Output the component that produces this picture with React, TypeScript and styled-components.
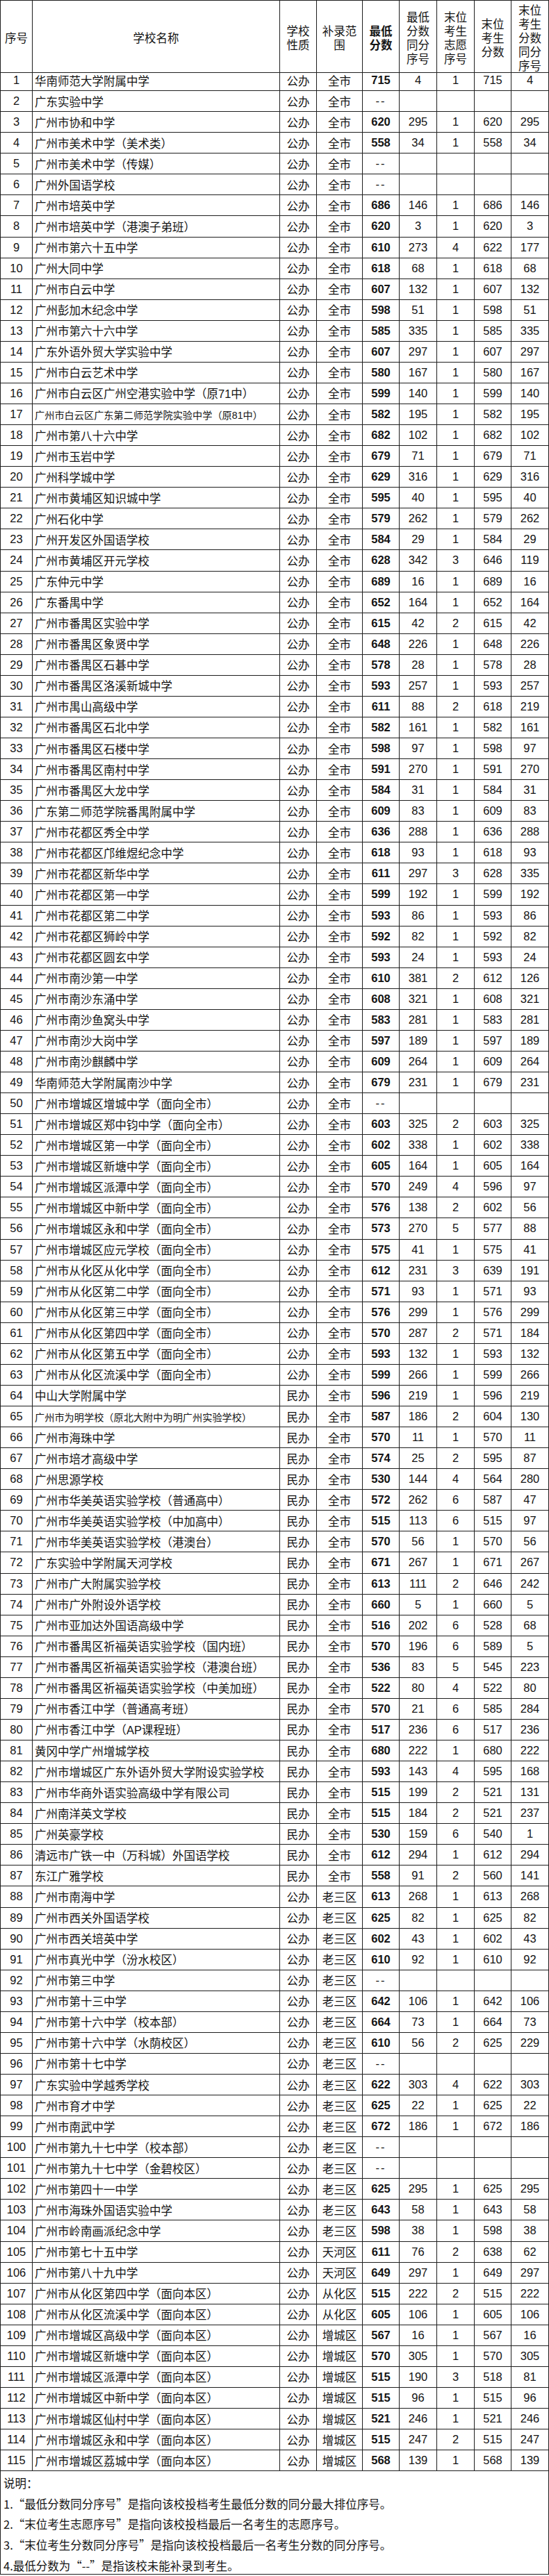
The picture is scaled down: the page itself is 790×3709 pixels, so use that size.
import React from "react";
import styled, { createGlobalStyle } from "styled-components";

const GlobalStyle = createGlobalStyle`
  html, body { margin: 0; padding: 0; background: #ffffff; }
  body {
    font-family: "Liberation Sans", "Noto Sans CJK SC", sans-serif;
    color: #141414;
  }
  * { box-sizing: border-box; }
`;

const COLS = "46px 356px 53px 66px 53px 54px 54px 53px 54px";
const LINE = "#1e1e1e";

const Sheet = styled.div`
  width: 790px;
  border-left: 1px solid ${LINE};
  border-top: 1px solid ${LINE};
  background: #fff;
`;

const HeaderRow = styled.div`
  display: grid;
  grid-template-columns: ${COLS};
  height: 100px;
`;

const HeaderCell = styled.div<{ $bold?: boolean }>`
  display: flex;
  flex-direction: column;
  align-items: center;
  justify-content: center;
  text-align: center;
  font-family: "Noto Sans CJK SC", sans-serif;
  font-size: 16.5px;
  line-height: 20px;
  font-weight: ${(p) => (p.$bold ? 700 : 400)};
  border-right: 1px solid ${LINE};
  border-bottom: 1px solid ${LINE};
  padding-top: 3px;
`;

const Row = styled.div`
  display: grid;
  grid-template-columns: ${COLS};
  height: 30.07px;
`;

const Cell = styled.div<{ $bold?: boolean }>`
  display: flex;
  align-items: center;
  justify-content: center;
  font-size: 16.5px;
  font-weight: ${(p) => (p.$bold ? 700 : 400)};
  border-right: 1px solid ${LINE};
  border-bottom: 1px solid ${LINE};
  white-space: nowrap;
  overflow: hidden;
`;

const NameCell = styled(Cell)<{ $small?: boolean }>`
  justify-content: flex-start;
  padding-left: 3px;
  font-size: ${(p) => (p.$small ? "14.2px" : "16.5px")};
`;

const Dash = styled.span`
  font-weight: 400;
  letter-spacing: 2px;
`;

const Notes = styled.div`
  height: 149px;
  border-right: 1px solid ${LINE};
  border-bottom: 1px solid ${LINE};
  padding: 3px 0 0 4px;
  font-family: "Noto Sans CJK SC", sans-serif;
  font-size: 16.5px;
  line-height: 29.6px;
`;

const NoteLine = styled.div`
  white-space: nowrap;
`;

const RAW = `华南师范大学附属中学|715|4|1|715|4
广东实验中学|--
广州市协和中学|620|295|1|620|295
广州市美术中学（美术类）|558|34|1|558|34
广州市美术中学（传媒）|--
广州外国语学校|--
广州市培英中学|686|146|1|686|146
广州市培英中学（港澳子弟班）|620|3|1|620|3
广州市第六十五中学|610|273|4|622|177
广州大同中学|618|68|1|618|68
广州市白云中学|607|132|1|607|132
广州彭加木纪念中学|598|51|1|598|51
广州市第六十六中学|585|335|1|585|335
广东外语外贸大学实验中学|607|297|1|607|297
广州市白云艺术中学|580|167|1|580|167
广州市白云区广州空港实验中学（原71中）|599|140|1|599|140
广州市白云区广东第二师范学院实验中学（原81中）|582|195|1|582|195
广州市第八十六中学|682|102|1|682|102
广州市玉岩中学|679|71|1|679|71
广州科学城中学|629|316|1|629|316
广州市黄埔区知识城中学|595|40|1|595|40
广州石化中学|579|262|1|579|262
广州开发区外国语学校|584|29|1|584|29
广州市黄埔区开元学校|628|342|3|646|119
广东仲元中学|689|16|1|689|16
广东番禺中学|652|164|1|652|164
广州市番禺区实验中学|615|42|2|615|42
广州市番禺区象贤中学|648|226|1|648|226
广州市番禺区石碁中学|578|28|1|578|28
广州市番禺区洛溪新城中学|593|257|1|593|257
广州市禺山高级中学|611|88|2|618|219
广州市番禺区石北中学|582|161|1|582|161
广州市番禺区石楼中学|598|97|1|598|97
广州市番禺区南村中学|591|270|1|591|270
广州市番禺区大龙中学|584|31|1|584|31
广东第二师范学院番禺附属中学|609|83|1|609|83
广州市花都区秀全中学|636|288|1|636|288
广州市花都区邝维煜纪念中学|618|93|1|618|93
广州市花都区新华中学|611|297|3|628|335
广州市花都区第一中学|599|192|1|599|192
广州市花都区第二中学|593|86|1|593|86
广州市花都区狮岭中学|592|82|1|592|82
广州市花都区圆玄中学|593|24|1|593|24
广州市南沙第一中学|610|381|2|612|126
广州市南沙东涌中学|608|321|1|608|321
广州市南沙鱼窝头中学|583|281|1|583|281
广州市南沙大岗中学|597|189|1|597|189
广州市南沙麒麟中学|609|264|1|609|264
华南师范大学附属南沙中学|679|231|1|679|231
广州市增城区增城中学（面向全市）|--
广州市增城区郑中钧中学（面向全市）|603|325|2|603|325
广州市增城区第一中学（面向全市）|602|338|1|602|338
广州市增城区新塘中学（面向全市）|605|164|1|605|164
广州市增城区派潭中学（面向全市）|570|249|4|596|97
广州市增城区中新中学（面向全市）|576|138|2|602|56
广州市增城区永和中学（面向全市）|573|270|5|577|88
广州市增城区应元学校（面向全市）|575|41|1|575|41
广州市从化区从化中学（面向全市）|612|231|3|639|191
广州市从化区第二中学（面向全市）|571|93|1|571|93
广州市从化区第三中学（面向全市）|576|299|1|576|299
广州市从化区第四中学（面向全市）|570|287|2|571|184
广州市从化区第五中学（面向全市）|593|132|1|593|132
广州市从化区流溪中学（面向全市）|599|266|1|599|266
中山大学附属中学|596|219|1|596|219
广州市为明学校（原北大附中为明广州实验学校）|587|186|2|604|130
广州市海珠中学|570|11|1|570|11
广州市培才高级中学|574|25|2|595|87
广州思源学校|530|144|4|564|280
广州市华美英语实验学校（普通高中）|572|262|6|587|47
广州市华美英语实验学校（中加高中）|515|113|6|515|97
广州市华美英语实验学校（港澳台）|570|56|1|570|56
广东实验中学附属天河学校|671|267|1|671|267
广州市广大附属实验学校|613|111|2|646|242
广州市广外附设外语学校|660|5|1|660|5
广州市亚加达外国语高级中学|516|202|6|528|68
广州市番禺区祈福英语实验学校（国内班）|570|196|6|589|5
广州市番禺区祈福英语实验学校（港澳台班）|536|83|5|545|223
广州市番禺区祈福英语实验学校（中美加班）|522|80|4|522|80
广州市香江中学（普通高考班）|570|21|6|585|284
广州市香江中学（AP课程班）|517|236|6|517|236
黄冈中学广州增城学校|680|222|1|680|222
广州市增城区广东外语外贸大学附设实验学校|593|143|4|595|168
广州市华商外语实验高级中学有限公司|515|199|2|521|131
广州南洋英文学校|515|184|2|521|237
广州英豪学校|530|159|6|540|1
清远市广铁一中（万科城）外国语学校|612|294|1|612|294
东江广雅学校|558|91|2|560|141
广州市南海中学|613|268|1|613|268
广州市西关外国语学校|625|82|1|625|82
广州市西关培英中学|602|43|1|602|43
广州市真光中学（汾水校区）|610|92|1|610|92
广州市第三中学|--
广州市第十三中学|642|106|1|642|106
广州市第十六中学（校本部）|664|73|1|664|73
广州市第十六中学（水荫校区）|610|56|2|625|229
广州市第十七中学|--
广东实验中学越秀学校|622|303|4|622|303
广州市育才中学|625|22|1|625|22
广州市南武中学|672|186|1|672|186
广州市第九十七中学（校本部）|--
广州市第九十七中学（金碧校区）|--
广州市第四十一中学|625|295|1|625|295
广州市海珠外国语实验中学|643|58|1|643|58
广州市岭南画派纪念中学|598|38|1|598|38
广州市第七十五中学|611|76|2|638|62
广州市第八十九中学|649|297|1|649|297
广州市从化区第四中学（面向本区）|515|222|2|515|222
广州市从化区流溪中学（面向本区）|605|106|1|605|106
广州市增城区高级中学（面向本区）|567|16|1|567|16
广州市增城区新塘中学（面向本区）|570|305|1|570|305
广州市增城区派潭中学（面向本区）|515|190|3|518|81
广州市增城区中新中学（面向本区）|515|96|1|515|96
广州市增城区仙村中学（面向本区）|521|246|1|521|246
广州市增城区永和中学（面向本区）|515|247|2|515|247
广州市增城区荔城中学（面向本区）|568|139|1|568|139`;

type School = {
  no: number;
  name: string;
  kind: string;
  scope: string;
  min: string;
  vals: string[];
  small: boolean;
};

const scopeFor = (n: number) => {
  if (n <= 87) return "全市";
  if (n <= 104) return "老三区";
  if (n <= 106) return "天河区";
  if (n <= 108) return "从化区";
  return "增城区";
};

const SCHOOLS: School[] = RAW.split("\n").map((line, i) => {
  const [name, min, ...vals] = line.split("|");
  const no = i + 1;
  return {
    no,
    name,
    kind: no >= 64 && no <= 87 ? "民办" : "公办",
    scope: scopeFor(no),
    min,
    vals: vals.length ? vals : ["", "", "", ""],
    small: no === 17 || no === 65,
  };
});

const HEADERS: { lines: string[]; bold?: boolean }[] = [
  { lines: ["序号"] },
  { lines: ["学校名称"] },
  { lines: ["学校", "性质"] },
  { lines: ["补录范", "围"] },
  { lines: ["最低", "分数"], bold: true },
  { lines: ["最低", "分数", "同分", "序号"] },
  { lines: ["末位", "考生", "志愿", "序号"] },
  { lines: ["末位", "考生", "分数"] },
  { lines: ["末位", "考生", "分数", "同分", "序号"] },
];

const NOTES = [
  "说明：",
  "1.“最低分数同分序号”是指向该校投档考生最低分数的同分最大排位序号。",
  "2.“末位考生志愿序号”是指向该校投档最后一名考生的志愿序号。",
  "3.“末位考生分数同分序号”是指向该校投档最后一名考生分数的同分序号。",
  "4.最低分数为“--”是指该校未能补录到考生。",
];

export default function App() {
  return (
    <>
      <GlobalStyle />
      <Sheet>
        <HeaderRow>
          {HEADERS.map((h, i) => (
            <HeaderCell key={i} $bold={h.bold}>
              {h.lines.map((l) => (
                <span key={l + i}>{l}</span>
              ))}
            </HeaderCell>
          ))}
        </HeaderRow>
        {SCHOOLS.map((s) => (
          <Row key={s.no}>
            <Cell>{s.no}</Cell>
            <NameCell $small={s.small}>{s.name}</NameCell>
            <Cell>{s.kind}</Cell>
            <Cell>{s.scope}</Cell>
            <Cell $bold>{s.min === "--" ? <Dash>--</Dash> : s.min}</Cell>
            {s.vals.map((v, j) => (
              <Cell key={j}>{v}</Cell>
            ))}
          </Row>
        ))}
        <Notes>
          {NOTES.map((n) => (
            <NoteLine key={n}>{n}</NoteLine>
          ))}
        </Notes>
      </Sheet>
    </>
  );
}
